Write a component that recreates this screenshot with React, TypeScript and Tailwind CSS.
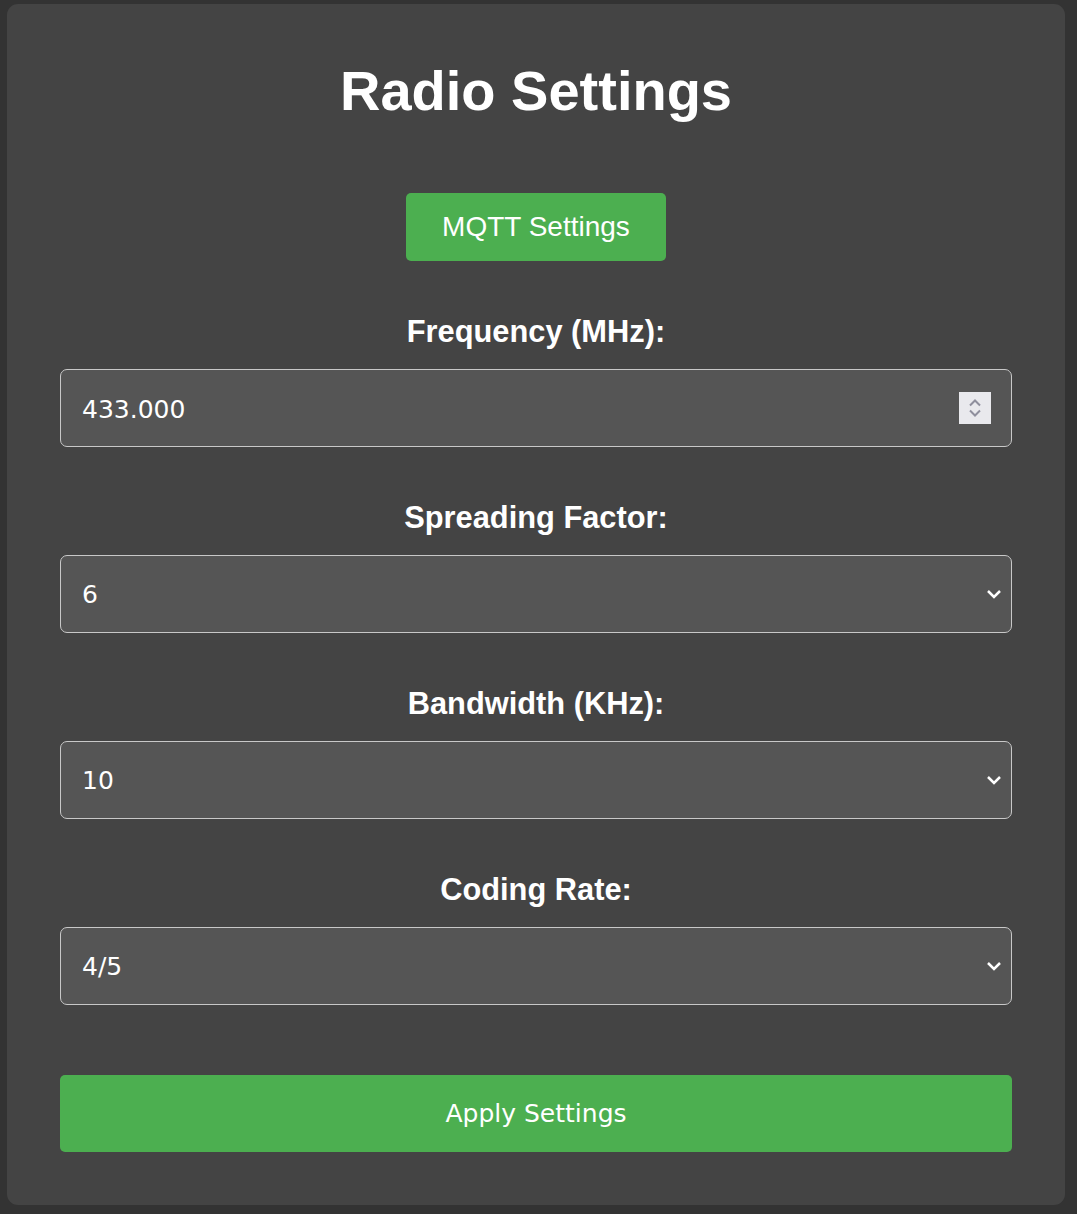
import { useState } from 'react';

const Chevron = () => (
  <svg className="pointer-events-none absolute right-[10px] top-1/2 -translate-y-1/2" width="16" height="10" viewBox="0 0 16 10" fill="none">
    <path d="M2 2l6 6 6-6" stroke="#ffffff" strokeWidth="2.5" />
  </svg>
);

const Spinner = () => (
  <div className="pointer-events-none absolute right-[21px] top-1/2 flex h-[32px] w-[32px] -translate-y-1/2 items-center justify-center bg-[#e9e9ed]">
    <svg width="14" height="22" viewBox="0 0 14 22" fill="none">
      <path d="M2 8.5l5-5 5 5" stroke="#8f8f9d" strokeWidth="2" />
      <path d="M2 13.5l5 5 5-5" stroke="#8f8f9d" strokeWidth="2" />
    </svg>
  </div>
);

export default function App() {
  const [frequency, setFrequency] = useState('433.000');
  const [sf, setSf] = useState('6');
  const [bw, setBw] = useState('10');
  const [cr, setCr] = useState('4/5');

  const label = "block text-center text-[30.8px] font-bold leading-[36px] text-white mb-[19px] font-['Liberation_Sans',Arial,sans-serif]";
  const field =
    "block h-[78px] w-full appearance-none rounded-[7px] border border-[#c8c8c8] bg-[#555555] px-[21px] pt-[2px] text-[25px] text-white outline-none font-['DejaVu_Sans',Tahoma,sans-serif]";

  return (
    <div className="min-h-screen bg-[#333333] pl-[7px] pt-[4px] pb-[9px]">
      <div className="w-[1058px] rounded-[11px] bg-[#444444] px-[53px] pt-[55px] pb-[53px] font-['Liberation_Sans',Arial,sans-serif]">
        <h1 className="text-center text-[56px] font-bold leading-[64px] text-white">Radio Settings</h1>

        <div className="mt-[70px] flex justify-center">
          <button className="h-[68px] w-[260px] rounded-[5px] bg-[#4caf50] text-[28px] text-white">MQTT Settings</button>
        </div>

        <div className="mt-[53px]">
          <label className={label}>Frequency (MHz):</label>
          <div className="relative">
            <input
              type="text"
              value={frequency}
              onChange={(e) => setFrequency(e.target.value)}
              className={field}
            />
            <Spinner />
          </div>
        </div>

        <div className="mt-[53px]">
          <label className={label}>Spreading Factor:</label>
          <div className="relative">
            <select value={sf} onChange={(e) => setSf(e.target.value)} className={field}>
              {['6', '7', '8', '9', '10', '11', '12'].map((v) => (
                <option key={v} value={v}>{v}</option>
              ))}
            </select>
            <Chevron />
          </div>
        </div>

        <div className="mt-[53px]">
          <label className={label}>Bandwidth (KHz):</label>
          <div className="relative">
            <select value={bw} onChange={(e) => setBw(e.target.value)} className={field}>
              {['10', '15', '20', '31', '41', '62', '125', '250', '500'].map((v) => (
                <option key={v} value={v}>{v}</option>
              ))}
            </select>
            <Chevron />
          </div>
        </div>

        <div className="mt-[53px]">
          <label className={label}>Coding Rate:</label>
          <div className="relative">
            <select value={cr} onChange={(e) => setCr(e.target.value)} className={field}>
              {['4/5', '4/6', '4/7', '4/8'].map((v) => (
                <option key={v} value={v}>{v}</option>
              ))}
            </select>
            <Chevron />
          </div>
        </div>

        <button className="mt-[70px] block h-[77px] w-full rounded-[5px] bg-[#4caf50] text-[25px] text-white font-['DejaVu_Sans',Tahoma,sans-serif]">
          Apply Settings
        </button>
      </div>
    </div>
  );
}
